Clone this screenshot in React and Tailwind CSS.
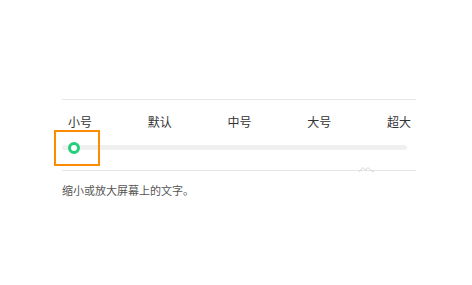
import React from 'react';

const sizes = ['小号', '默认', '中号', '大号', '超大'];

const App = () => {
  return (
    <div className="w-[472px] h-[285px] bg-white" style={{ fontFamily: '"Noto Sans CJK SC", "Noto Sans", sans-serif' }}>
      <div className="pt-[99px] ml-[62px] w-[354px]">
        <div className="border-t border-[#e6e6e6]" />

        {/* size labels */}
        <div className="flex justify-between pl-[6px] pr-[5px] mt-[14px] h-[16px] items-center text-[12px] leading-[16px] text-[#333]">
          {sizes.map((s) => (
            <span key={s}>{s}</span>
          ))}
        </div>

        {/* slider */}
        <div className="relative h-[40px] pt-[15px]">
          <div className="flex items-center w-[345px] h-[5px] rounded-full bg-[#f0f0f0]">
            <div className="ml-[6px] shrink-0 w-[12px] h-[12px] rounded-full border-[3px] border-[#22d07c] bg-white" />
          </div>
          {/* focus outline */}
          <div className="absolute left-[-8px] top-0 w-[46px] h-[36px] border-2 border-[#ff8c00]" />
        </div>

        {/* bottom rule with small wave mark */}
        <div className="relative border-t border-[#e6e6e6]">
          <svg className="absolute left-[297px] top-[-6px]" width="15" height="7" viewBox="0 0 15 7" fill="none">
            <path d="M0 6.5 Q1.5 6.5 2.5 4 Q4 1 5.5 4 Q7 6.5 7.5 4 Q9 1 10.5 4 Q11.5 6.5 15 6.5" stroke="#d4d4d4" strokeWidth="1" />
          </svg>
        </div>

        <p className="mt-[12px] text-[11px] leading-[14px] text-[#555]">缩小或放大屏幕上的文字。</p>
      </div>
    </div>
  );
};

export default App;
